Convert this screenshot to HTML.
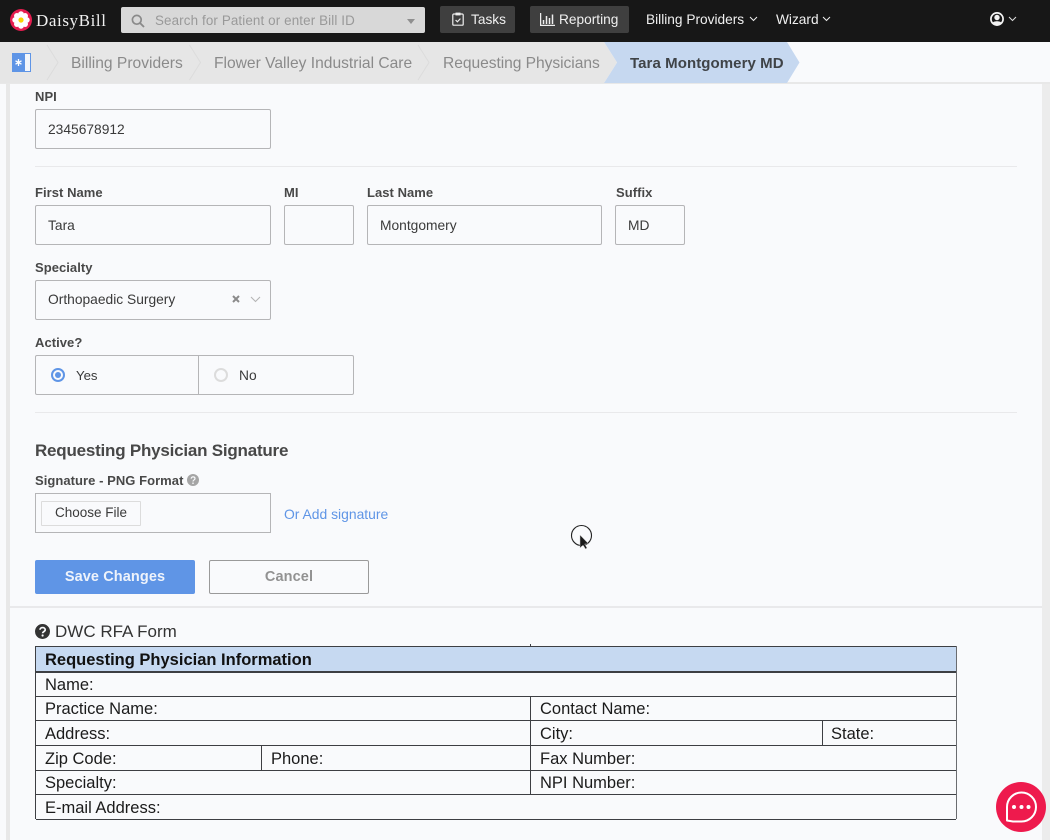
<!DOCTYPE html>
<html><head><meta charset="utf-8"><style>
html,body{margin:0;padding:0;width:1050px;height:840px;overflow:hidden;background:#f9fafc;font-family:"Liberation Sans",sans-serif;color:#3d3d3d}
div,span,svg{position:absolute;box-sizing:border-box}
.t{white-space:nowrap;line-height:20px;height:20px}
.l{font-size:13px;font-weight:bold;color:#484848;letter-spacing:.05px}
.i{border:1px solid #b5b5b7;border-radius:2px;background:#f9fafc}
.v{font-size:13.8px;color:#3a3a3a}
.h{background:#e9e9eb;height:1px;left:35px;width:982px}
.r{background:#3d3f43;height:1px;left:36px;width:921px}
.c{background:#3d3f43;width:1px}
.f{font-size:16.5px;color:#1b1b1b;line-height:20px}
.b{font-size:15.6px;color:#8a8a8a}
.n{font-size:13.7px;color:#f0f0f0}
</style></head><body>
<div style="left:0;top:0;width:1050px;height:42px;background:#171717"></div>
<svg style="left:10px;top:9px" width="22" height="22" viewBox="0 0 22 22"><circle cx="11" cy="11" r="11" fill="#e51d4f"/><g fill="#fff"><circle cx="11" cy="5.2" r="2.9"/><circle cx="11" cy="16.8" r="2.9"/><circle cx="5.2" cy="11" r="2.9"/><circle cx="16.8" cy="11" r="2.9"/><circle cx="6.900" cy="6.900" r="2.900"/><circle cx="15.100" cy="6.900" r="2.900"/><circle cx="6.900" cy="15.100" r="2.900"/><circle cx="15.100" cy="15.100" r="2.900"/><circle cx="11" cy="11" r="5"/></g><circle cx="11" cy="11" r="2.600" fill="#fbd400"/></svg>
<div class="t" style="left:36px;top:11px;font-family:'Liberation Serif',serif;font-size:17px;color:#f0f0f0;letter-spacing:.6px">DaisyBill</div>
<div style="left:121px;top:7px;width:304px;height:26px;background:#d8d8d8;border-radius:2px"></div>
<svg style="left:131px;top:14px" width="14" height="14" viewBox="0 0 14 14"><circle cx="5.800" cy="5.800" r="4.400" fill="none" stroke="#8a8a8a" stroke-width="1.700"/><path d="M9 9l4 4" stroke="#8a8a8a" stroke-width="1.900"/></svg>
<div class="t" style="left:155px;top:11px;font-size:13.4px;color:#999;letter-spacing:.12px">Search for Patient or enter Bill ID</div>
<div style="left:407px;top:19px;width:0;height:0;border-left:4px solid transparent;border-right:4px solid transparent;border-top:5px solid #8f8f8f"></div>

<div style="left:440px;top:6px;width:75px;height:27px;background:#3f3f3f;border-radius:2px"></div>
<svg style="left:452px;top:12px" width="12" height="14" viewBox="0 0 12 14"><path d="M3.500 2H1.800a1 1 0 0 0-1 1v9.200a1 1 0 0 0 1 1h8.400a1 1 0 0 0 1-1V3a1 1 0 0 0-1-1H8.500" fill="none" stroke="#eee" stroke-width="1.200"/><rect x="3.500" y=".6" width="5" height="2.800" fill="#eee"/><path d="M3.600 8l1.800 1.800 3-3.200" fill="none" stroke="#eee" stroke-width="1.200"/></svg>
<div class="t n" style="left:471px;top:10px">Tasks</div>
<div style="left:530px;top:6px;width:99px;height:27px;background:#3f3f3f;border-radius:2px"></div>
<svg style="left:540px;top:13px" width="15" height="13" viewBox="0 0 15 13"><path d="M.5 0v12.500H15M3.500 7v4M6.500 3v8M9.500 5v6M12.500 1.500V11" fill="none" stroke="#eee" stroke-width="1.500"/></svg>
<div class="t n" style="left:559px;top:10px">Reporting</div>
<div class="t n" style="left:646px;top:10px">Billing Providers</div>
<svg style="left:749px;top:16px" width="9" height="6" viewBox="0 0 9 6"><path d="M1 1l3.500 3.500L8 1" fill="none" stroke="#eee" stroke-width="1"/></svg>
<div class="t n" style="left:776px;top:10px">Wizard</div>
<svg style="left:822px;top:16px" width="9" height="6" viewBox="0 0 9 6"><path d="M1 1l3.500 3.500L8 1" fill="none" stroke="#eee" stroke-width="1"/></svg>
<svg style="left:990px;top:12px" width="14" height="14" viewBox="0 0 14 14"><circle cx="7" cy="7" r="6.100" fill="none" stroke="#f2f2f2" stroke-width="1.700"/><circle cx="7" cy="5.500" r="2.700" fill="#f2f2f2"/><path d="M2.500 11c1-2.300 8-2.300 9 0-2 2.600-7 2.600-9 0z" fill="#f2f2f2"/></svg>
<svg style="left:1008px;top:16px" width="9" height="6" viewBox="0 0 9 6"><path d="M1 1l3.500 3.500L8 1" fill="none" stroke="#ddd" stroke-width="1"/></svg>

<div style="left:0;top:42px;width:1050px;height:41px;background:#f9fafc"></div>
<div style="left:0;top:82px;width:1050px;height:2px;background:#e8e8e8"></div>
<svg style="left:0;top:42px" width="810" height="41" viewBox="0 0 810 41"><path d="M0 0H604L604 41H0z" fill="#e6e6e6"/><path d="M604 0H787L799.500 20.500 787 41H604L617 20.500z" fill="#c6d8f0"/><path d="M604 0l13 20.500L604 41z" fill="#e6e6e6"/><g fill="none" stroke="#dcdcdc"><path d="M47 3l11 17.500L47 38M189.500 3l11 17.500L189.500 38M418 3l11 17.500L418 38"/></g></svg>
<div style="left:12px;top:53px;width:19px;height:19px;background:#5f95e6"></div>
<div style="left:25px;top:54px;width:5px;height:17px;background:#f3f6fb"></div>
<svg style="left:15px;top:59px" width="7" height="7" viewBox="0 0 7 7"><path d="M3.500 0v7M.5 1.800l6 3.400M6.500 1.800l-6 3.400" stroke="#fff" stroke-width="1.300"/></svg>
<div class="t b" style="left:71px;top:54px">Billing Providers</div>
<div class="t b" style="left:214px;top:54px">Flower Valley Industrial Care</div>
<div class="t b" style="left:443px;top:54px;letter-spacing:-.05px">Requesting Physicians</div>
<div class="t" style="left:630px;top:54px;font-size:15px;font-weight:bold;color:#3f4347;letter-spacing:.08px">Tara Montgomery MD</div>

<div style="left:6px;top:84px;width:4px;height:756px;background:#e8e8e8"></div>
<div style="left:1042px;top:84px;width:8px;height:756px;background:#ececec"></div>

<div class="t l" style="left:35px;top:87px">NPI</div>
<div class="i" style="left:35px;top:109px;width:236px;height:40px"></div>
<div class="t v" style="left:48px;top:120px">2345678912</div>
<div class="h" style="top:166px"></div>

<div class="t l" style="left:35px;top:183px">First Name</div>
<div class="t l" style="left:284px;top:183px">MI</div>
<div class="t l" style="left:367px;top:183px">Last Name</div>
<div class="t l" style="left:616px;top:183px">Suffix</div>
<div class="i" style="left:35px;top:205px;width:236px;height:40px"></div>
<div class="i" style="left:284px;top:205px;width:70px;height:40px"></div>
<div class="i" style="left:367px;top:205px;width:235px;height:40px"></div>
<div class="i" style="left:615px;top:205px;width:70px;height:40px"></div>
<div class="t v" style="left:48px;top:216px">Tara</div>
<div class="t v" style="left:380px;top:216px">Montgomery</div>
<div class="t v" style="left:628px;top:216px">MD</div>

<div class="t l" style="left:35px;top:258px">Specialty</div>
<div class="i" style="left:35px;top:280px;width:236px;height:40px"></div>
<div class="t v" style="left:48px;top:290px">Orthopaedic Surgery</div>
<svg style="left:232px;top:295px" width="8" height="8" viewBox="0 0 8 8"><path d="M1 1l6 6M7 1L1 7" stroke="#8b8b8b" stroke-width="2"/></svg>
<svg style="left:250px;top:296px" width="11" height="7" viewBox="0 0 11 7"><path d="M1 1l4.500 4.500L10 1" fill="none" stroke="#b5b5b5" stroke-width="1.100"/></svg>

<div class="t l" style="left:35px;top:333px">Active?</div>
<div class="i" style="left:35px;top:355px;width:319px;height:40px"></div>
<div style="left:198px;top:356px;width:1px;height:38px;background:#b5b5b7"></div>
<div style="left:51px;top:368px;width:14px;height:14px;border:2px solid #5f95e6;border-radius:50%;background:#f9fafc"></div>
<div style="left:55px;top:372px;width:6px;height:6px;border-radius:50%;background:#5f95e6"></div>
<div class="t v" style="left:76px;top:366px;font-size:13.2px">Yes</div>
<div style="left:214px;top:368px;width:14px;height:14px;border:2px solid #dcdcdc;border-radius:50%"></div>
<div class="t v" style="left:239px;top:366px">No</div>
<div class="h" style="top:412px"></div>

<div class="t" style="left:35px;top:441px;font-size:17px;font-weight:bold;color:#484848;letter-spacing:-.22px">Requesting Physician Signature</div>
<div class="t l" style="left:35px;top:471px">Signature - PNG Format</div>
<svg style="left:187px;top:474px" width="12" height="12" viewBox="0 0 12 12"><circle cx="6" cy="6" r="6" fill="#a5a5a5"/><path d="M4.200 4.600c0-2.300 3.800-2.300 3.800 0 0 1.400-2 1.300-2 2.900" fill="none" stroke="#f9fafc" stroke-width="1.200"/><circle cx="6" cy="9.200" r=".8" fill="#f9fafc"/></svg>
<div class="i" style="left:35px;top:493px;width:236px;height:40px;border-radius:0"></div>
<div style="left:41px;top:501px;width:100px;height:25px;border:1px solid #dcdcdc;border-radius:1px"></div>
<div class="t" style="left:55px;top:503px;font-size:13.500px;color:#3a3a3a">Choose File</div>
<div class="t" style="left:284px;top:504px;font-size:13.900px;color:#5f95e6">Or Add signature</div>

<div style="left:35px;top:560px;width:160px;height:34px;background:#5f95e6;border-radius:2px"></div>
<div class="t" style="left:35px;top:567px;width:160px;text-align:center;font-size:14.5px;font-weight:bold;color:#eef3fb;letter-spacing:.1px">Save Changes</div>
<div style="left:209px;top:560px;width:160px;height:34px;border:1px solid #9a9a9a;border-radius:2px"></div>
<div class="t" style="left:209px;top:567px;width:160px;text-align:center;font-size:14.5px;font-weight:bold;color:#929292;letter-spacing:.1px">Cancel</div>

<div style="left:10px;top:606px;width:1032px;height:2px;background:#e9e9eb"></div>

<svg style="left:35px;top:624px" width="15" height="15" viewBox="0 0 15 15"><circle cx="7.500" cy="7.500" r="7.500" fill="#333"/><path d="M5 5.800c0-3 5.200-3 5.200 0 0 1.900-2.600 1.700-2.600 3.500" fill="none" stroke="#f9fafc" stroke-width="1.700"/><circle cx="7.600" cy="11.500" r="1.100" fill="#f9fafc"/></svg>
<div class="t" style="left:55px;top:622px;font-size:17px;color:#333">DWC RFA Form</div>

<div style="left:36px;top:646px;width:920px;height:25px;background:#c6d9f1"></div>
<div class="r" style="top:645.500px;width:920px"></div>
<div class="r" style="top:671px;height:1.500px;width:920px"></div>
<div class="r" style="top:696px;width:920px"></div>
<div class="r" style="top:720px;width:920px"></div>
<div class="r" style="top:745px;width:920px"></div>
<div class="r" style="top:770px;width:920px"></div>
<div class="r" style="top:794px;width:920px"></div>
<div class="r" style="top:818.500px;width:920px"></div>
<div class="c" style="left:35px;top:646px;height:173px"></div>
<div class="c" style="left:956px;top:646px;height:173px;background:#6a6c70"></div>
<div class="c" style="left:530px;top:696px;height:99px"></div>
<div class="c" style="left:530px;top:644px;height:2px"></div>
<div class="c" style="left:261px;top:745px;height:25px"></div>
<div class="c" style="left:822px;top:720px;height:25px"></div>

<div class="t f" style="left:45px;top:650px;font-weight:bold;color:#111">Requesting Physician Information</div>
<div class="t f" style="left:45px;top:675px">Name:</div>
<div class="t f" style="left:45px;top:699px">Practice Name:</div>
<div class="t f" style="left:45px;top:724px">Address:</div>
<div class="t f" style="left:45px;top:749px">Zip Code:</div>
<div class="t f" style="left:45px;top:773px">Specialty:</div>
<div class="t f" style="left:45px;top:798px">E-mail Address:</div>
<div class="t f" style="left:271px;top:749px">Phone:</div>
<div class="t f" style="left:540px;top:699px">Contact Name:</div>
<div class="t f" style="left:540px;top:724px">City:</div>
<div class="t f" style="left:831px;top:724px">State:</div>
<div class="t f" style="left:540px;top:749px">Fax Number:</div>
<div class="t f" style="left:540px;top:773px">NPI Number:</div>

<svg style="left:570px;top:523px" width="26" height="30" viewBox="0 0 26 30"><circle cx="11.500" cy="12.500" r="10" fill="none" stroke="#222" stroke-width="1.100"/><path d="M10 12v13l3-3 2.500 4 1.500-1-2.300-4h4z" fill="#1a1a1a" stroke="#ccc" stroke-width=".5"/></svg>

<svg style="left:996px;top:782px" width="50" height="50" viewBox="0 0 50 50"><circle cx="25" cy="25" r="25" fill="#ee1a4d"/><path d="M11 38.500V25a14.500 14.500 0 1 1 14.500 14.500H17z" fill="none" stroke="#fff" stroke-width="2" stroke-linejoin="round"/><circle cx="18" cy="25" r="2" fill="#fff"/><circle cx="25.500" cy="25" r="2" fill="#fff"/><circle cx="32.500" cy="25" r="2" fill="#fff"/></svg>
</body></html>
